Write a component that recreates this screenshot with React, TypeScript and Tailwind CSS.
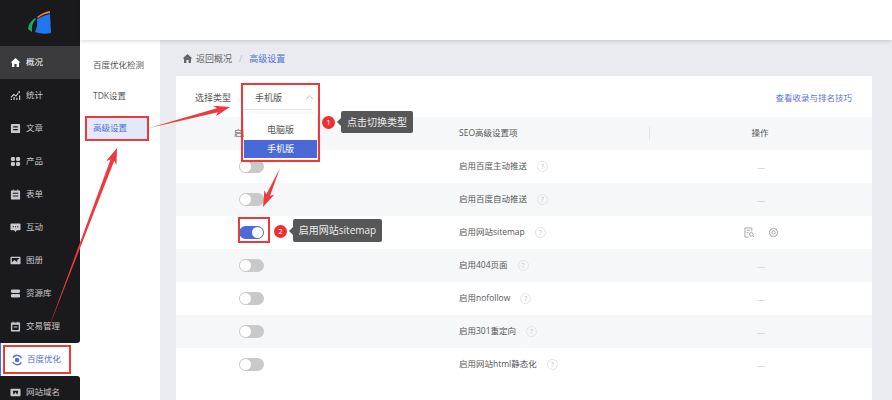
import React from "react";

const FONT = "font-['Open_Sans','Noto_Sans_CJK_SC',sans-serif]";

function Icon({ name }: { name: string }) {
  const c = "w-[11px] h-[11px] shrink-0";
  switch (name) {
    case "home":
      return <svg viewBox="0 0 12 12" className={c} fill="currentColor"><path d="M6 1 .6 6h1.6v5h2.6V7.600h2.400V11h2.600V6h1.600z" /></svg>;
    case "stats":
      return <svg viewBox="0 0 12 12" className={c} fill="none" stroke="currentColor" strokeWidth="1.300"><path d="M1 8 4 5l2.500 1.600L9 3.500" /><path d="M1.500 11V9.500M4.500 11V7.500M7.500 11V8.500M10.500 11V6" /><circle cx="10" cy="2.200" r="1" fill="currentColor" stroke="none" /></svg>;
    case "doc":
      return <svg viewBox="0 0 12 12" className={c} fill="currentColor"><path fillRule="evenodd" d="M2 1h8a1 1 0 0 1 1 1v8a1 1 0 0 1-1 1H2a1 1 0 0 1-1-1V2a1 1 0 0 1 1-1zm1.500 2.600v1.200h5V3.600zm0 3v1.200h5V6.600z" /></svg>;
    case "grid":
      return <svg viewBox="0 0 12 12" className={c} fill="currentColor"><rect x="1" y="1" width="4.400" height="4.400" rx="1.400" /><rect x="6.600" y="1" width="4.400" height="4.400" rx="1.400" /><rect x="1" y="6.600" width="4.400" height="4.400" rx="1.400" /><rect x="6.600" y="6.600" width="4.400" height="4.400" rx="1.400" /></svg>;
    case "form":
      return <svg viewBox="0 0 12 12" className={c} fill="currentColor"><path fillRule="evenodd" d="M3 .6h1v1h4v-1h1v1h1.400a.6.6 0 0 1 .6.6v8.600a.6.6 0 0 1-.6.6H1.600a.6.6 0 0 1-.6-.6V2.200a.6.6 0 0 1 .6-.6H3zM3 4v1.200h6V4zm0 3v1.200h6V7z" /></svg>;
    case "chat":
      return <svg viewBox="0 0 12 12" className={c} fill="currentColor"><path fillRule="evenodd" d="M1.500 1.500h9a1 1 0 0 1 1 1v5.500a1 1 0 0 1-1 1H7.500L6 10.800 4.500 9h-3a1 1 0 0 1-1-1V2.500a1 1 0 0 1 1-1zM3 4.500v1.200h1.200V4.500zm2.400 0v1.200h1.200V4.500zm2.400 0v1.200H9V4.500z" /></svg>;
    case "image":
      return <svg viewBox="0 0 12 12" className={c} fill="currentColor"><path fillRule="evenodd" d="M1.500 2h9a1 1 0 0 1 1 1v6a1 1 0 0 1-1 1h-9a1 1 0 0 1-1-1V3a1 1 0 0 1 1-1zM2 7.800 5 5.500 8 8l-.2-2.500L10 4.200V3.400H2z" /></svg>;
    case "db":
      return <svg viewBox="0 0 12 12" className={c} fill="currentColor"><rect x="1" y="1.600" width="10" height="3.800" rx="1.500" /><rect x="1" y="6.600" width="10" height="3.800" rx="1.500" /></svg>;
    case "trade":
      return <svg viewBox="0 0 12 12" className={c} fill="currentColor"><path fillRule="evenodd" d="M3 .6h1v1h4v-1h1v1h1.400a.6.6 0 0 1 .6.6v8.600a.6.6 0 0 1-.6.6H1.600a.6.6 0 0 1-.6-.6V2.200a.6.6 0 0 1 .6-.6H3zM2.600 4v5.800h6.800V4zM4 6h4v1.200H4z" /></svg>;
    case "seo":
      return <svg viewBox="0 0 12 12" className="w-[12px] h-[12px] shrink-0" fill="none" stroke="currentColor"><path d="M2 3.500A5 5 0 0 1 10.500 4M10.300 8.500A5 5 0 0 1 1.700 8" strokeWidth="1.500" /><circle cx="6" cy="6" r="2.200" fill="currentColor" stroke="none" /></svg>;
    case "domain":
      return <svg viewBox="0 0 12 12" className={c} fill="currentColor"><path fillRule="evenodd" d="M1.500 2h9a1 1 0 0 1 1 1v6a1 1 0 0 1-1 1h-9a1 1 0 0 1-1-1V3a1 1 0 0 1 1-1zM3 4l.8 4h.8L6 5.500 7.400 8h.8L9 4H3z" /></svg>;
  }
  return null;
}

function NavItem({ icon, label, active }: { icon: string; label: string; active?: boolean }) {
  return (
    <div className={`h-[33px] shrink-0 flex items-center gap-[5px] pl-[10px] text-[8.500px] ${active ? "bg-[#3b3b3d] text-white" : "text-[#c9c9cb]"}`}>
      <Icon name={icon} />
      <span className="whitespace-nowrap">{label}</span>
    </div>
  );
}

function Toggle({ on }: { on?: boolean }) {
  return (
    <div className={`w-[25px] h-[13px] rounded-full flex items-center ${on ? "bg-[#4a6bd8] justify-end pr-[1px]" : "bg-[#c9c9c9] pl-[1px]"}`}>
      <div className="w-[11px] h-[11px] rounded-full bg-white" />
    </div>
  );
}

function Help() {
  return <span className="ml-[10px] w-[11px] h-[11px] rounded-full border border-[#e4e4e4] text-[#c4c4c4] text-[7px] leading-none flex items-center justify-center">?</span>;
}

const rows: { label: string; on?: boolean; ops?: boolean }[] = [
  { label: "启用百度主动推送" },
  { label: "启用百度自动推送" },
  { label: "启用网站sitemap", on: true, ops: true },
  { label: "启用404页面" },
  { label: "启用nofollow" },
  { label: "启用301重定向" },
  { label: "启用网站html静态化" },
];

function Arrow({ x1, y1, x2, y2 }: { x1: number; y1: number; x2: number; y2: number }) {
  const dx = x2 - x1, dy = y2 - y1;
  const len = Math.hypot(dx, dy);
  const ux = dx / len, uy = dy / len, nx = -uy, ny = ux;
  const at = (d: number, w: number) => `${x1 + ux * d + nx * w},${y1 + uy * d + ny * w}`;
  const pts = [at(0, 0), at(len - 13, 2), at(len - 16, 5.500), at(len, 0), at(len - 16, -5.500), at(len - 13, -2)].join(" ");
  return <polygon points={pts} fill="#ec3a3e" />;
}

export default function App() {
  return (
    <div className={`relative w-[892px] h-[400px] overflow-hidden flex bg-white text-[#555] ${FONT}`}>
      {/* sidebar */}
      <aside className="w-[80px] shrink-0 flex flex-col">
        <div className="bg-[#1a1a1c] rounded-br-[3px] shrink-0">
          <div className="h-[46px] flex items-center justify-center">
            <svg viewBox="26 9 28 28" className="w-[28px] h-[28px]">
              <path d="M37 19 Q44 15 50 14 L51 33 Q43 35 35 32 Q38 26 37 19Z" fill="#2277f0" />
              <path d="M35 18 Q29 22 28 29 L32 32 Q31 24 36 19Z" fill="#1fa86a" />
              <path d="M37 17 Q43 12 50 11 L50 13 Q43 14 38 18Z" fill="#ee7a3f" />
            </svg>
          </div>
          <NavItem icon="home" label="概况" active />
          <NavItem icon="stats" label="统计" />
          <NavItem icon="doc" label="文章" />
          <NavItem icon="grid" label="产品" />
          <NavItem icon="form" label="表单" />
          <NavItem icon="chat" label="互动" />
          <NavItem icon="image" label="图册" />
          <NavItem icon="db" label="资源库" />
          <NavItem icon="trade" label="交易管理" />
        </div>
        <div className="h-[33px] shrink-0 flex items-center gap-[4px] pl-[10px] text-[8.500px] text-[#4f6fd8] bg-white border-l border-[#4a6bd8]">
          <Icon name="seo" />
          <span>百度优化</span>
        </div>
        <div className="h-[33px] shrink-0 bg-[#1a1a1c] rounded-tr-[3px]">
          <NavItem icon="domain" label="网站域名" />
        </div>
      </aside>

      {/* right */}
      <div className="flex-1 flex flex-col min-w-0">
        <header className="h-[40px] bg-white shadow-[0_1px_4px_rgba(0,0,0,0.16)] relative z-10" />
        <div className="flex-1 flex min-h-0">
          <nav className="w-[80px] shrink-0 bg-white pl-[13px] text-[8.500px] text-[#555] flex flex-col">
            <div className="h-[10px]" />
            <div className="h-[31px] flex items-center whitespace-nowrap">百度优化检测</div>
            <div className="h-[30px] flex items-center">TDK设置</div>
            <div className="h-[23px] mt-[6px] -ml-[8px] w-[63px] pl-[8px] flex items-center bg-[#e3e8fb] text-[#4f6fd8]">高级设置</div>
          </nav>
          <main className="flex-1 bg-[#e9ebef] pl-[16px] pr-[20px] flex flex-col min-w-0">
            <div className="h-[36px] pt-[1px] pl-[6px] flex items-center text-[9px] text-[#666]">
              <Icon name="home" />
              <span className="ml-[3px]">返回概况</span>
              <span className="mx-[7px] text-[#bbb]">/</span>
              <span className="text-[#4f6fd8]">高级设置</span>
            </div>
            <section className="flex-1 bg-white flex flex-col text-[8.500px]">
              <div className="h-[41px] shrink-0 flex items-center pl-[19px] pr-[20px] pt-[3px] relative">
                <span className="text-[9px] w-[46px]">选择类型</span>
                <div className="relative w-[71px] h-[24px] flex items-center pl-[14px] text-[9px] border-b border-[#e6e6e6]">
                  <span>手机版</span>
                  <svg viewBox="0 0 10 6" className="absolute -right-[2px] top-[9px] w-[9px] h-[5px]" fill="none" stroke="#999" strokeWidth="0.800"><path d="M1 5 5 1l4 4" /></svg>
                </div>
                <a className="ml-auto text-[#5a75d8] text-[8.500px]">查看收录与排名技巧</a>
              </div>
              <div className="h-[33px] shrink-0 flex items-center bg-[#f6f7f9]">
                <div className="w-[283px] pl-[58px]">启用</div>
                <div className="w-[191px] relative h-full flex items-center">
                  <span>SEO高级设置项</span>
                  <span className="absolute right-0 top-[10px] h-[13px] w-px bg-[#e5e5e5]" />
                </div>
                <div className="w-[222px] text-center pr-[2px]">操作</div>
              </div>
              {rows.map((r, i) => (
                <div key={r.label} className={`h-[33px] shrink-0 flex items-center ${i % 2 === 1 ? "bg-[#f6f7f9]" : "bg-white"}`}>
                  <div className="w-[283px] pl-[63px]"><Toggle on={r.on} /></div>
                  <div className="w-[191px] flex items-center">
                    <span className="whitespace-nowrap">{r.label}</span>
                    <Help />
                  </div>
                  <div className="w-[222px] flex items-center justify-center text-[#c8c8c8]">
                    {r.ops ? (
                      <div className="flex items-center gap-[13px] text-[#8d8d8d]">
                        <svg viewBox="0 0 12 12" className="w-[11px] h-[11px]" fill="none" stroke="currentColor" strokeWidth="0.800"><path d="M8.500 4.500V1H1v10h4" /><path d="M3 3.500h3.500M3 6h2" /><circle cx="8" cy="8" r="2" /><path d="m9.500 9.500 1.500 1.500" /></svg>
                        <svg viewBox="0 0 12 12" className="w-[11px] h-[11px]" fill="none" stroke="currentColor" strokeWidth="0.800"><circle cx="6" cy="6" r="1.800" /><path d="M6 1l1.200 1.200 1.700-.2.300 1.700 1.500.9-.7 1.400.7 1.400-1.500.9-.3 1.700-1.700-.2L6 11l-1.200-1.200-1.700.2-.3-1.700-1.500-.9.7-1.400-.7-1.400 1.500-.9.3-1.700 1.700.2z" /></svg>
                      </div>
                    ) : (
                      <span className="text-[8px]">—</span>
                    )}
                  </div>
                </div>
              ))}
            </section>
          </main>
        </div>
      </div>

      {/* dropdown over the table */}
      <div className="absolute left-[244px] top-[114px] w-[73px] h-[45px] bg-white shadow-[0_1px_5px_rgba(0,0,0,0.12)] flex flex-col items-center text-[9px]">
        <div className="h-[26px] flex items-center pt-[6px]">电脑版</div>
        <div className="w-full h-[18px] bg-[#4a69d6] text-white flex items-center justify-center">手机版</div>
      </div>

      {/* annotation tips */}
      <div className="absolute left-[322px] top-[115.500px] w-[13px] h-[13px] rounded-full bg-[#ec2f33] text-white text-[8px] flex items-center justify-center">1</div>
      <div className="absolute left-[341px] top-[111px] w-[72px] h-[22px] rounded-[2px] bg-[#575757] text-[#eee] text-[10px] flex items-center justify-center">
        <span className="absolute -left-[4px] top-[7px] w-0 h-0 border-y-[4px] border-y-transparent border-r-[4px] border-r-[#575757]" />
        点击切换类型
      </div>
      <div className="absolute left-[274px] top-[224.500px] w-[13px] h-[13px] rounded-full bg-[#ec2f33] text-white text-[8px] flex items-center justify-center">2</div>
      <div className="absolute left-[293px] top-[219px] w-[89px] h-[23px] rounded-[2px] bg-[#575757] text-[#eee] text-[10px] flex items-center justify-center whitespace-nowrap">
        <span className="absolute -left-[4px] top-[7.500px] w-0 h-0 border-y-[4px] border-y-transparent border-r-[4px] border-r-[#575757]" />
        启用网站sitemap
      </div>

      {/* red highlight boxes */}
      <div className="absolute left-[85px] top-[116px] w-[64px] h-[25px] border-2 border-[#e93a3e]" />
      <div className="absolute left-[241px] top-[83px] w-[79px] h-[79px] border-2 border-[#e93a3e]" />
      <div className="absolute left-[238px] top-[217px] w-[32px] h-[26px] border-2 border-[#e93a3e]" />
      <div className="absolute left-[3px] top-[345px] w-[68px] h-[29px] border-2 border-[#e93a3e]" />

      {/* arrows */}
      <svg className="absolute inset-0 w-[892px] h-[400px] pointer-events-none" viewBox="0 0 892 400">
        <Arrow x1={46} y1={335} x2={117} y2={148} />
        <Arrow x1={149} y1={128} x2={230} y2={107} />
        <Arrow x1={280} y1={168} x2={263} y2={207} />
      </svg>
    </div>
  );
}
